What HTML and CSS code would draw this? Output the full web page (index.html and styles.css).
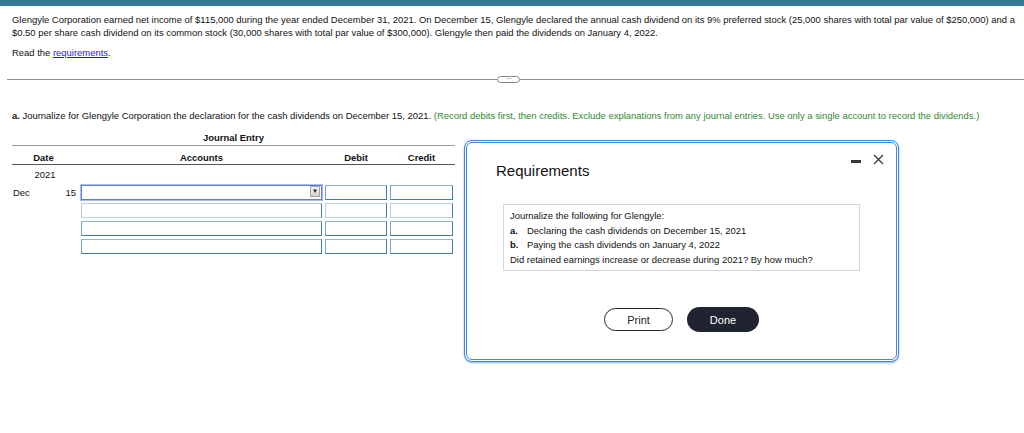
FILE: index.html
```html
<!DOCTYPE html>
<html>

<head>
    <title>Journal Entry - Cash Dividends</title>
    <link rel="stylesheet" href="styles.css">
</head>

<body>
    <div class="topbar"></div>

    <div class="question">
        <p>Glengyle Corporation earned net income of $115,000 during the year ended December 31, 2021. On December 15, Glengyle declared the annual cash dividend on its 9% preferred stock (25,000 shares with total par value of $250,000) and a $0.50 per share cash dividend on its common stock (30,000 shares with total par value of $300,000). Glengyle then paid the dividends on January 4, 2022.</p>
        <p class="read">Read the <a href="#" class="link">requirements</a>.</p>
    </div>

    <div class="divider"><span class="pill">&middot;&middot;&middot;</span></div>

    <div class="part">
        <p class="instruction"><b>a.</b> Journalize for Glengyle Corporation the declaration for the cash dividends on December 15, 2021. <span class="hint">(Record debits first, then credits. Exclude explanations from any journal entries. Use only a single account to record the dividends.)</span></p>

        <div class="journal">
            <div class="journal-title">Journal Entry</div>
            <div class="row head">
                <div>Date</div>
                <div>Accounts</div>
                <div>Debit</div>
                <div>Credit</div>
            </div>
            <div class="row year">
                <div>2021</div>
            </div>
            <div class="row entry">
                <div class="date"><span>Dec</span><span>15</span></div>
                <div class="field select focus"><span class="arrow">&#9660;</span></div>
                <div class="field"></div>
                <div class="field"></div>
            </div>
            <div class="row entry">
                <div></div>
                <div class="field light"></div>
                <div class="field light"></div>
                <div class="field light"></div>
            </div>
            <div class="row entry">
                <div></div>
                <div class="field"></div>
                <div class="field"></div>
                <div class="field"></div>
            </div>
            <div class="row entry">
                <div></div>
                <div class="field"></div>
                <div class="field"></div>
                <div class="field"></div>
            </div>
        </div>
    </div>

    <div class="modal">
        <div class="modal-head">
            <h3>Requirements</h3>
            <div class="window-btns">
                <span class="minimize"></span>
                <svg class="close" width="11" height="11" viewBox="0 0 11 11">
                    <path d="M1 1 L10 10 M10 1 L1 10" stroke="#3a3f47" stroke-width="1.4" fill="none" />
                </svg>
            </div>
        </div>
        <div class="req-box">
            <div>Journalize the following for Glengyle:</div>
            <div><b class="key">a.</b>Declaring the cash dividends on December 15, 2021</div>
            <div><b class="key">b.</b>Paying the cash dividends on January 4, 2022</div>
            <div>Did retained earnings increase or decrease during 2021? By how much?</div>
        </div>
        <div class="modal-actions">
            <button class="btn-print">Print</button>
            <button class="btn-done">Done</button>
        </div>
    </div>
</body>

</html>
```

FILE: styles.css
```css
body {
    margin: 0;
    font-family: "Liberation Sans", Arial, sans-serif;
    font-size: 9.45px;
    line-height: 13px;
    color: #111;
    background-color: white;
}

p {
    margin: 0;
}

.topbar {
    height: 6px;
    background-color: #377898;
}

.question {
    padding: 7px 4px 0 12px;
}

.question .read {
    margin-top: 7px;
}

.link {
    color: #1f1fd8;
    text-decoration: underline;
}

.divider {
    display: flex;
    align-items: center;
    margin: 17px 0 0 7px;
}

.divider::before,
.divider::after {
    content: "";
    height: 1px;
    background-color: #8a9099;
}

.divider::before {
    flex: 490;
}

.divider::after {
    flex: 504;
}

.pill {
    width: 21px;
    height: 5px;
    border: 1px solid #7d8692;
    border-radius: 4px;
    font-size: 7px;
    line-height: 4px;
    text-align: center;
    color: #5a6470;
    letter-spacing: -1px;
}

.part {
    padding: 26px 12px 0 12px;
}

.hint {
    color: #2f8a2f;
}

.journal {
    width: 443px;
    margin-top: 9px;
}

.journal-title {
    text-align: center;
    font-weight: bold;
    padding-bottom: 1px;
    border-bottom: 1px solid #9a9a9a;
}

.row {
    display: grid;
    grid-template-columns: 66px 241px 62px 63px;
    column-gap: 3px;
}

.row.head {
    padding-top: 5px;
    font-weight: bold;
    text-align: center;
    border-bottom: 1px solid #555;
}

.row.head div:first-child {
    padding-right: 3px;
}

.row.year {
    padding-top: 3px;
    text-align: center;
}

.row.entry {
    margin-top: 3px;
}

.row.year + .row.entry {
    margin-top: 4px;
}

.date {
    display: flex;
    justify-content: space-between;
    align-items: center;
    padding-left: 1px;
    padding-right: 2px;
}

.field {
    height: 13px;
    border: 1px solid #3f7f9f;
    border-top-color: #8fb5c8;
    border-left-color: #7aa6bd;
    background-color: white;
}

.field.light {
    border-color: #b9d0dc;
    border-right-color: #3f7f9f;
}

.field.select {
    position: relative;
}

.field.focus {
    border: 1px solid #5b7fe0;
    box-shadow: 0 0 0 1px #a9bdf0;
}

.arrow {
    position: absolute;
    right: 1px;
    top: 0;
    width: 10px;
    height: 11px;
    border: 1px solid #a6a6a6;
    box-sizing: border-box;
    background: linear-gradient(#f4f4f4, #d2d2d2);
    font-size: 6px;
    line-height: 9px;
    text-align: center;
    color: #111;
}

.modal {
    position: absolute;
    left: 464px;
    top: 140px;
    width: 435px;
    height: 222px;
    box-sizing: border-box;
    border: 3px double #3f89d8;
    border-radius: 8px;
    box-shadow: 0 1px 2px rgba(60, 130, 210, 0.6);
    background-color: white;
}

.modal-head {
    display: flex;
    justify-content: space-between;
    padding: 11px 12px 0 29px;
}

.modal-head h3 {
    margin: 8px 0 0 0;
    font-size: 15px;
    line-height: 18px;
    font-weight: normal;
    color: #111;
}

.window-btns {
    display: flex;
    align-items: flex-start;
    gap: 12px;
}

.minimize {
    width: 10px;
    height: 3px;
    margin-top: 6px;
    background-color: #33373d;
}

.req-box {
    margin: 24px 36px 0 36px;
    padding: 4px 6px 3px 6px;
    border: 1px solid #d3d6da;
    line-height: 14.5px;
}

.key {
    display: inline-block;
    width: 17px;
}

.modal-actions {
    display: flex;
    justify-content: center;
    align-items: center;
    gap: 14px;
    margin-top: 36px;
}

.modal-actions button {
    font-family: "Liberation Sans", Arial, sans-serif;
    font-size: 11px;
    cursor: pointer;
}

.btn-print {
    width: 69px;
    height: 23px;
    border: 1.5px solid #23272e;
    border-radius: 12px;
    background-color: white;
    color: #1f232a;
}

.btn-done {
    width: 72px;
    height: 25px;
    border: none;
    border-radius: 13px;
    background-color: #1f2430;
    color: white;
}
```
